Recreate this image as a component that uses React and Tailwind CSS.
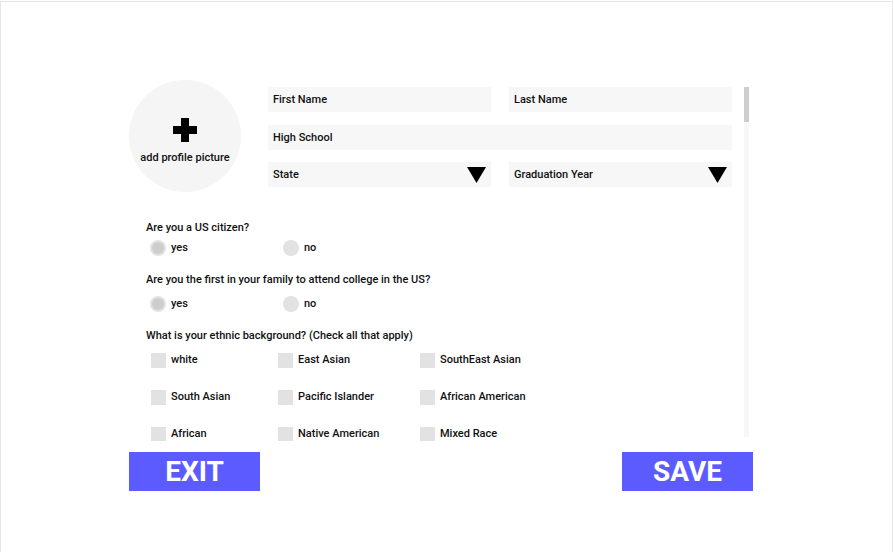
import { useState } from 'react';

const font = { fontFamily: 'Roboto, "Liberation Sans", sans-serif' };

function Field({ label, arrow, className = '' }) {
  return (
    <div className={`h-[25px] bg-[#f7f7f7] flex items-center justify-between pl-[5px] pr-[5px] pt-[1px] ${className}`}>
      <span className="text-[11px] font-medium text-[#111]">{label}</span>
      {arrow && (
        <svg width="19" height="16" viewBox="0 0 19 16">
          <polygon points="0,0 19,0 9.5,16" fill="#000" />
        </svg>
      )}
    </div>
  );
}

function Radio({ label, checked, onClick }) {
  return (
    <button onClick={onClick} className="flex items-center gap-[5px] w-[133px] text-left">
      <span className="w-[16px] h-[16px] rounded-full bg-[#e2e2e2] flex items-center justify-center">
        {checked && <span className="w-[12px] h-[12px] rounded-full bg-[#cdcdcd]" />}
      </span>
      <span className="text-[11px] font-medium text-[#111]">{label}</span>
    </button>
  );
}

function Check({ label, width }) {
  const [on, setOn] = useState(false);
  return (
    <button onClick={() => setOn(!on)} className={`flex items-center gap-[5px] text-left ${width}`}>
      <span className={`w-[15px] h-[15px] ${on ? 'bg-[#bdbdbd]' : 'bg-[#e2e2e2]'}`} />
      <span className="text-[11px] font-medium text-[#111]">{label}</span>
    </button>
  );
}

export default function App() {
  const [citizen, setCitizen] = useState('yes');
  const [first, setFirst] = useState('yes');

  const rows = [
    ['white', 'East Asian', 'SouthEast Asian'],
    ['South Asian', 'Pacific Islander', 'African American'],
    ['African', 'Native American', 'Mixed Race'],
  ];

  return (
    <div className="w-[894px] h-[552px] bg-white" style={font}>
      <div className="mt-[1px] w-[893px] h-[551px] border border-[#e6e6e6] border-b-0 pt-[78px] pl-[128px]">
        <div className="flex">
          {/* scrolling form */}
          <div className="w-[615px] h-[361px] overflow-hidden">
            <div className="flex">
              <div className="w-[112px] h-[112px] rounded-full bg-[#f5f5f5] flex flex-col items-center">
                <svg className="mt-[38px]" width="24" height="24" viewBox="0 0 24 24">
                  <path d="M8 0h8v8h8v8h-8v8H8v-8H0V8h8z" fill="#000" />
                </svg>
                <span className="mt-[8px] text-[11px] font-medium text-[#111]">add profile picture</span>
              </div>
              <div className="ml-[27px] mt-[7px] w-[464px] flex flex-col">
                <div className="flex gap-[18px]">
                  <Field label="First Name" className="flex-1" />
                  <Field label="Last Name" className="flex-1" />
                </div>
                <Field label="High School" className="mt-[13px]" />
                <div className="mt-[12px] flex gap-[18px]">
                  <Field label="State" arrow className="flex-1" />
                  <Field label="Graduation Year" arrow className="flex-1" />
                </div>
              </div>
            </div>

            <div className="pl-[17px]">
              <p className="mt-[29px] h-[14px] leading-[14px] text-[11px] font-medium text-[#111]">Are you a US citizen?</p>
              <div className="mt-[5px] ml-[4px] flex h-[16px]">
                <Radio label="yes" checked={citizen === 'yes'} onClick={() => setCitizen('yes')} />
                <Radio label="no" checked={citizen === 'no'} onClick={() => setCitizen('no')} />
              </div>

              <p className="mt-[17px] h-[14px] leading-[14px] text-[11px] font-medium text-[#111]">
                Are you the first in your family to attend college in the US?
              </p>
              <div className="mt-[9px] ml-[4px] flex h-[16px]">
                <Radio label="yes" checked={first === 'yes'} onClick={() => setFirst('yes')} />
                <Radio label="no" checked={first === 'no'} onClick={() => setFirst('no')} />
              </div>

              <p className="mt-[17px] h-[14px] leading-[14px] text-[11px] font-medium text-[#111]">
                What is your ethnic background? (Check all that apply)
              </p>
              <div className="mt-[10px] ml-[5px] flex flex-col gap-[22px]">
                {rows.map((r) => (
                  <div key={r[0]} className="flex h-[15px]">
                    <Check label={r[0]} width="w-[127px]" />
                    <Check label={r[1]} width="w-[142px]" />
                    <Check label={r[2]} width="w-[150px]" />
                  </div>
                ))}
              </div>
            </div>
          </div>

          {/* scrollbar */}
          <div className="mt-[7px] w-[5px] h-[350px] bg-[#f7f7f7]">
            <div className="h-[35px] bg-[#cdcdcd]" />
          </div>
        </div>

        <div className="mt-[11px] w-[624px] flex justify-between">
          <button className="w-[131px] h-[39px] bg-[#5b5bff] text-white text-[28px] font-bold leading-none">
            EXIT
          </button>
          <button className="w-[131px] h-[39px] bg-[#5b5bff] text-white text-[28px] font-bold leading-none">
            SAVE
          </button>
        </div>
      </div>
    </div>
  );
}
